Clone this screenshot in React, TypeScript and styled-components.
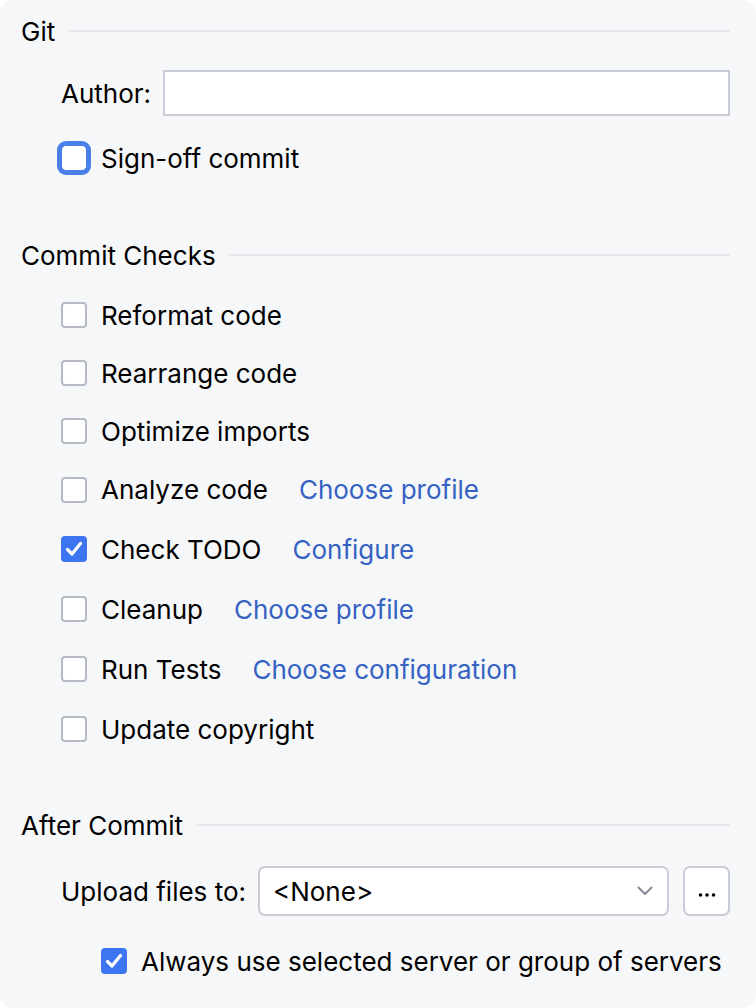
import React from "react";
import styled, {createGlobalStyle} from "styled-components";

const GlobalStyle = createGlobalStyle`
    html, body {
        margin: 0;
        padding: 0;
        background: #ffffff;
    }
    body {
        font-family: Inter, "Noto Sans", sans-serif;
        color: #000000;
    }
`;

const Panel = styled.div`
    box-sizing: border-box;
    width: 756px;
    height: 1008px;
    background: #f6f7f9;
    border-radius: 14px;
    padding: 16px 26px 0 21px;
    display: flex;
    flex-direction: column;
    font-size: 26px;
`;

const SectionHeader = styled.div<{$top?: number}>`
    display: flex;
    align-items: center;
    gap: 13px;
    height: 30px;
    margin-top: ${({$top}) => $top ?? 0}px;
    white-space: nowrap;
    &::after {
        content: "";
        flex: 1;
        height: 2px;
        background: #e8e9ec;
    }
`;

const FieldRow = styled.div<{$top: number; $indent?: number}>`
    display: flex;
    align-items: center;
    margin-top: ${({$top}) => $top}px;
    padding-left: ${({$indent}) => $indent ?? 40}px;
`;

const Label = styled.span`
    margin-right: 12px;
    white-space: nowrap;
`;

const TextInput = styled.div`
    flex: 1;
    height: 46px;
    box-sizing: border-box;
    background: #ffffff;
    border: 2px solid #c9ccd6;
`;

const CheckList = styled.div`
    display: flex;
    flex-direction: column;
    margin-top: 16px;
    padding-left: 40px;
`;

const CheckRow = styled.div<{$h?: number}>`
    display: flex;
    align-items: center;
    height: ${({$h}) => $h ?? 58}px;
`;

const Box = styled.span<{$checked?: boolean; $focused?: boolean}>`
    box-sizing: border-box;
    flex: none;
    width: 26px;
    height: 26px;
    border-radius: 4px;
    margin-right: 14px;
    display: inline-flex;
    align-items: center;
    justify-content: center;
    background: ${({$checked}) => ($checked ? "#3d74f0" : "#ffffff")};
    border: 2px solid ${({$checked}) => ($checked ? "#3d74f0" : "#b6b9c6")};
    ${({$focused}) =>
        $focused &&
        `
        border: 1px solid #4a7ee8;
        box-shadow: 0 0 0 4px #4a7ee8;
        border-radius: 5px;
    `}
`;

const CheckLabel = styled.span`
    white-space: nowrap;
`;

const Link = styled.a`
    color: #3562c3;
    text-decoration: none;
    margin-left: 31px;
    white-space: nowrap;
    cursor: pointer;
`;

const Select = styled.div`
    flex: 1;
    box-sizing: border-box;
    height: 50px;
    background: #ffffff;
    border: 2px solid #c9ccd6;
    border-radius: 7px;
    display: flex;
    align-items: center;
    justify-content: space-between;
    padding: 0 14px 0 13px;
`;

const DotsButton = styled.div`
    box-sizing: border-box;
    flex: none;
    width: 47px;
    height: 50px;
    margin-left: 14px;
    background: #ffffff;
    border: 2px solid #c9ccd6;
    border-radius: 7px;
    display: flex;
    align-items: center;
    justify-content: center;
    padding-top: 8px;
`;

const Check = () => (
    <svg width="18" height="16" viewBox="0 0 18 16">
        <path d="M2.5 8.5 L7 13 L15.5 2.5" fill="none" stroke="#ffffff" strokeWidth="3.2" strokeLinecap="round" strokeLinejoin="round" />
    </svg>
);

const Chevron = () => (
    <svg width="16" height="10" viewBox="0 0 16 10">
        <path d="M1.5 1.5 L8 8 L14.5 1.5" fill="none" stroke="#818594" strokeWidth="1.8" strokeLinecap="round" strokeLinejoin="round" />
    </svg>
);

const Dots = () => (
    <svg width="20" height="6" viewBox="0 0 20 6">
        <circle cx="3.5" cy="3" r="1.8" fill="#000" />
        <circle cx="10" cy="3" r="1.8" fill="#000" />
        <circle cx="16.5" cy="3" r="1.8" fill="#000" />
    </svg>
);

interface Item {
    label: string;
    checked?: boolean;
    link?: string;
    h: number;
}

const checks: Item[] = [
    {label: "Reformat code", h: 58},
    {label: "Rearrange code", h: 58},
    {label: "Optimize imports", h: 58},
    {label: "Analyze code", link: "Choose profile", h: 59},
    {label: "Check TODO", link: "Configure", checked: true, h: 60},
    {label: "Cleanup", link: "Choose profile", h: 60},
    {label: "Run Tests", link: "Choose configuration", h: 60},
    {label: "Update copyright", h: 60},
];

export default function App() {
    return (
        <>
            <GlobalStyle />
            <Panel>
                <SectionHeader>Git</SectionHeader>
                <FieldRow $top={24}>
                    <Label>Author:</Label>
                    <TextInput />
                </FieldRow>
                <FieldRow $top={24}>
                    <CheckRow $h={36}>
                        <Box $focused />
                        <CheckLabel>Sign-off commit</CheckLabel>
                    </CheckRow>
                </FieldRow>

                <SectionHeader $top={64}>Commit Checks</SectionHeader>
                <CheckList>
                    {checks.map((c) => (
                        <CheckRow key={c.label} $h={c.h}>
                            <Box $checked={c.checked}>{c.checked && <Check />}</Box>
                            <CheckLabel>{c.label}</CheckLabel>
                            {c.link && <Link>{c.link}</Link>}
                        </CheckRow>
                    ))}
                </CheckList>

                <SectionHeader $top={51}>After Commit</SectionHeader>
                <FieldRow $top={26}>
                    <Label>Upload files to:</Label>
                    <Select>
                        <span>&lt;None&gt;</span>
                        <Chevron />
                    </Select>
                    <DotsButton>
                        <Dots />
                    </DotsButton>
                </FieldRow>
                <FieldRow $top={27} $indent={80}>
                    <CheckRow $h={36}>
                        <Box $checked>
                            <Check />
                        </Box>
                        <CheckLabel>Always use selected server or group of servers</CheckLabel>
                    </CheckRow>
                </FieldRow>
            </Panel>
        </>
    );
}
